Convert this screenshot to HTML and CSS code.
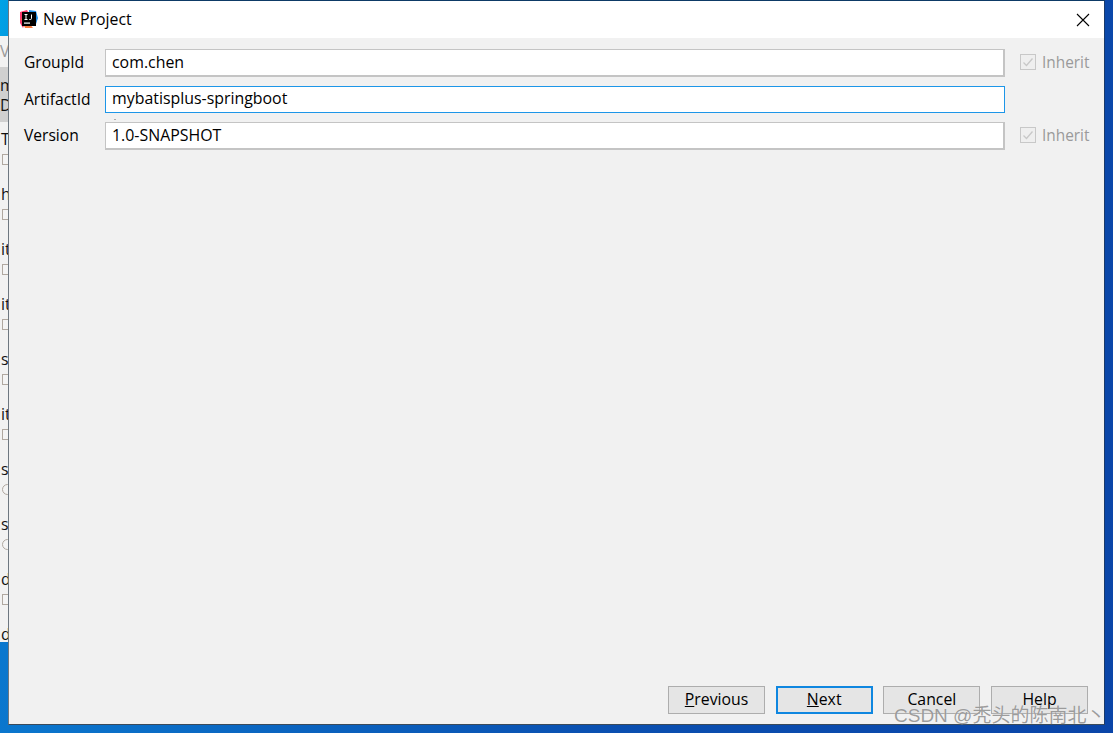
FILE: index.html
```html
<!DOCTYPE html>
<html lang="en">
<head>
<meta charset="utf-8">
<title>New Project</title>
<link rel="stylesheet" href="styles.css">
</head>
<body>
<div class="desktop">
  <div class="behind">
    <div class="b-row b-v">V</div>
    <div class="b-sel">m<br>D</div>
    <div class="b-item"><span>T</span><i class="box"></i></div>
    <div class="b-item"><span>h</span><i class="box"></i></div>
    <div class="b-item"><span>it</span><i class="box"></i></div>
    <div class="b-item"><span>it</span><i class="box"></i></div>
    <div class="b-item"><span>s</span><i class="box"></i></div>
    <div class="b-item"><span>it</span><i class="box"></i></div>
    <div class="b-item"><span>s</span><i class="box round"></i></div>
    <div class="b-item"><span>s</span><i class="box round"></i></div>
    <div class="b-item"><span>d</span><i class="box"></i></div>
    <div class="b-item"><span>d</span></div>
  </div>
  <section class="dialog">
    <header class="titlebar">
      <svg class="logo" width="20" height="20" viewBox="0 0 20 20">
        <path d="M1 3 L8 1 L10 5 L4 19 L1 14 Z" fill="#fc3a6d"/>
        <path d="M10 1 L17 2 L19 9 L17 15 L10 5 Z" fill="#1e8fe8"/>
        <path d="M2 10 L6 19 L14 19 L5 8 Z" fill="#f97a3c"/>
        <rect x="3" y="3" width="14" height="14" fill="#000"/>
        <rect x="5" y="13.5" width="6" height="1.2" fill="#fff"/>
        <path d="M5.5 5.5h3M7 5.5v5M5.5 10.5h3M12.5 5.5v4q0 1-1.200 1h-1" fill="none" stroke="#fff" stroke-width="1"/>
      </svg>
      <h1 class="title">New Project</h1>
      <svg class="close" width="14" height="14" viewBox="0 0 14 14"><path d="M1 1 L13 13 M13 1 L1 13" stroke="#000" stroke-width="1.100" fill="none"/></svg>
    </header>
    <div class="content">
      <form class="form">
        <label class="lbl">GroupId</label>
        <div class="field">com.chen</div>
        <div class="inherit"><span class="check"><svg width="14" height="14" viewBox="0 0 14 14"><path d="M2.500 7.500 L5.500 10.500 L11.500 3.500" fill="none" stroke="#c8c8c8" stroke-width="1.300"/></svg></span>Inherit</div>

        <label class="lbl">ArtifactId</label>
        <div class="field focused">mybatisplus-springboot</div>
        <div></div>

        <label class="lbl">Version</label>
        <div class="field">1.0-SNAPSHOT</div>
        <div class="inherit"><span class="check"><svg width="14" height="14" viewBox="0 0 14 14"><path d="M2.500 7.500 L5.500 10.500 L11.500 3.500" fill="none" stroke="#c8c8c8" stroke-width="1.300"/></svg></span>Inherit</div>
      </form>
      <footer class="buttons">
        <button class="btn" type="button"><u>P</u>revious</button>
        <button class="btn primary" type="button"><u>N</u>ext</button>
        <button class="btn" type="button">Cancel</button>
        <button class="btn" type="button">Help</button>
      </footer>
    </div>
  </section>
  <div class="watermark">CSDN @秃头的陈南北丶</div>
</div>
</body>
</html>
```
FILE: styles.css
```css
* { box-sizing: border-box; }
html, body { margin: 0; padding: 0; }
body { width: 1113px; height: 733px; overflow: hidden; font-family: "Open Sans", "Noto Sans CJK SC", sans-serif; }
.desktop { position: relative; width: 1113px; height: 733px; overflow: hidden;
  background: linear-gradient(100deg, #00a3e6 0, #0a7ad0 6%, #0a4fb0 60%, #0a45a8 100%); }
.behind { position: absolute; left: 0; top: 36px; width: 9px; height: 606px; background: #f2f2f2; overflow: hidden; color: #111; font-size: 15.800px; line-height: 20px; }
.b-row { height: 31px; padding-top: 5px; color: #999; }
.b-sel { height: 55px; background: #d0d0d0; padding-top: 8px; line-height: 20px; }
.b-item { height: 55px; padding-left: 1px; }
.b-item span { display: block; height: 32px; line-height: 20px; padding-top: 7px; }
.box { display: block; width: 8px; height: 11px; margin-left: 1px; border: 1px solid #b0a8a0; background: #f4f4f4; }
.box.round { border-radius: 50%; width: 11px; }
.dialog { position: absolute; left: 8px; top: 0; width: 1097px; height: 725px; display: flex; flex-direction: column;
  background: #f1f1f1; border: 1px solid #3a4a5a; border-left-color: #6e7780; border-top-color: #0d3a66; border-right-color: #1a3a6a; }
.titlebar { height: 37px; background: #fff; display: flex; align-items: center; padding: 0 14px 0 10px; flex: none; }
.logo { flex: none; margin-right: 4px; margin-top: -1px; }
.title { margin: -2px 0 0; font-size: 15.800px; font-weight: 400; color: #000; flex: 1; }
.close { flex: none; }
.content { flex: 1; display: flex; flex-direction: column; justify-content: space-between; padding: 11px 15px 10px 15px; }
.form { display: grid; grid-template-columns: 81px 900px 1fr; grid-auto-rows: 28px; row-gap: 8.500px; align-items: center; }
.lbl { font-size: 15.600px; color: #000; margin-top: -2px; }
.field { position: relative; height: 28px; background: #fff; border: 1px solid #c4c4c4; border-bottom-width: 2px; border-right-width: 2px; padding-left: 6px; font-size: 15.900px; line-height: 25px; color: #000; }
.field.focused { border: 1.500px solid #1d96e8; line-height: 23px; height: 27px; }
.field.focused::after { content: ""; position: absolute; left: 8px; top: 32px; width: 2px; height: 1px; background: #aaa; }
.inherit { display: flex; align-items: center; padding-left: 15px; font-size: 15.400px; color: #9a9a9a; margin-top: -2px; }
.check { width: 16px; height: 16px; border: 1px solid #c8c8c8; margin-right: 6px; background: #efefef; display: block; }
.check svg { display: block; }
.buttons { display: flex; justify-content: flex-end; gap: 10.670px; padding-right: 1px; }
.btn { width: 97px; height: 28px; background: #e5e5e5; border: 1px solid #adadad; font: 15.800px/22px "Open Sans", sans-serif; color: #000; padding: 0 0 3px; }
.btn.primary { border: 2px solid #0f87e0; }
.watermark { position: absolute; left: 894px; top: 700px; font: 19px "Liberation Sans", "Noto Sans CJK SC", sans-serif; color: rgba(140,140,140,.85); text-shadow: 0 0 1px rgba(255,255,255,.6); white-space: nowrap; }
```
